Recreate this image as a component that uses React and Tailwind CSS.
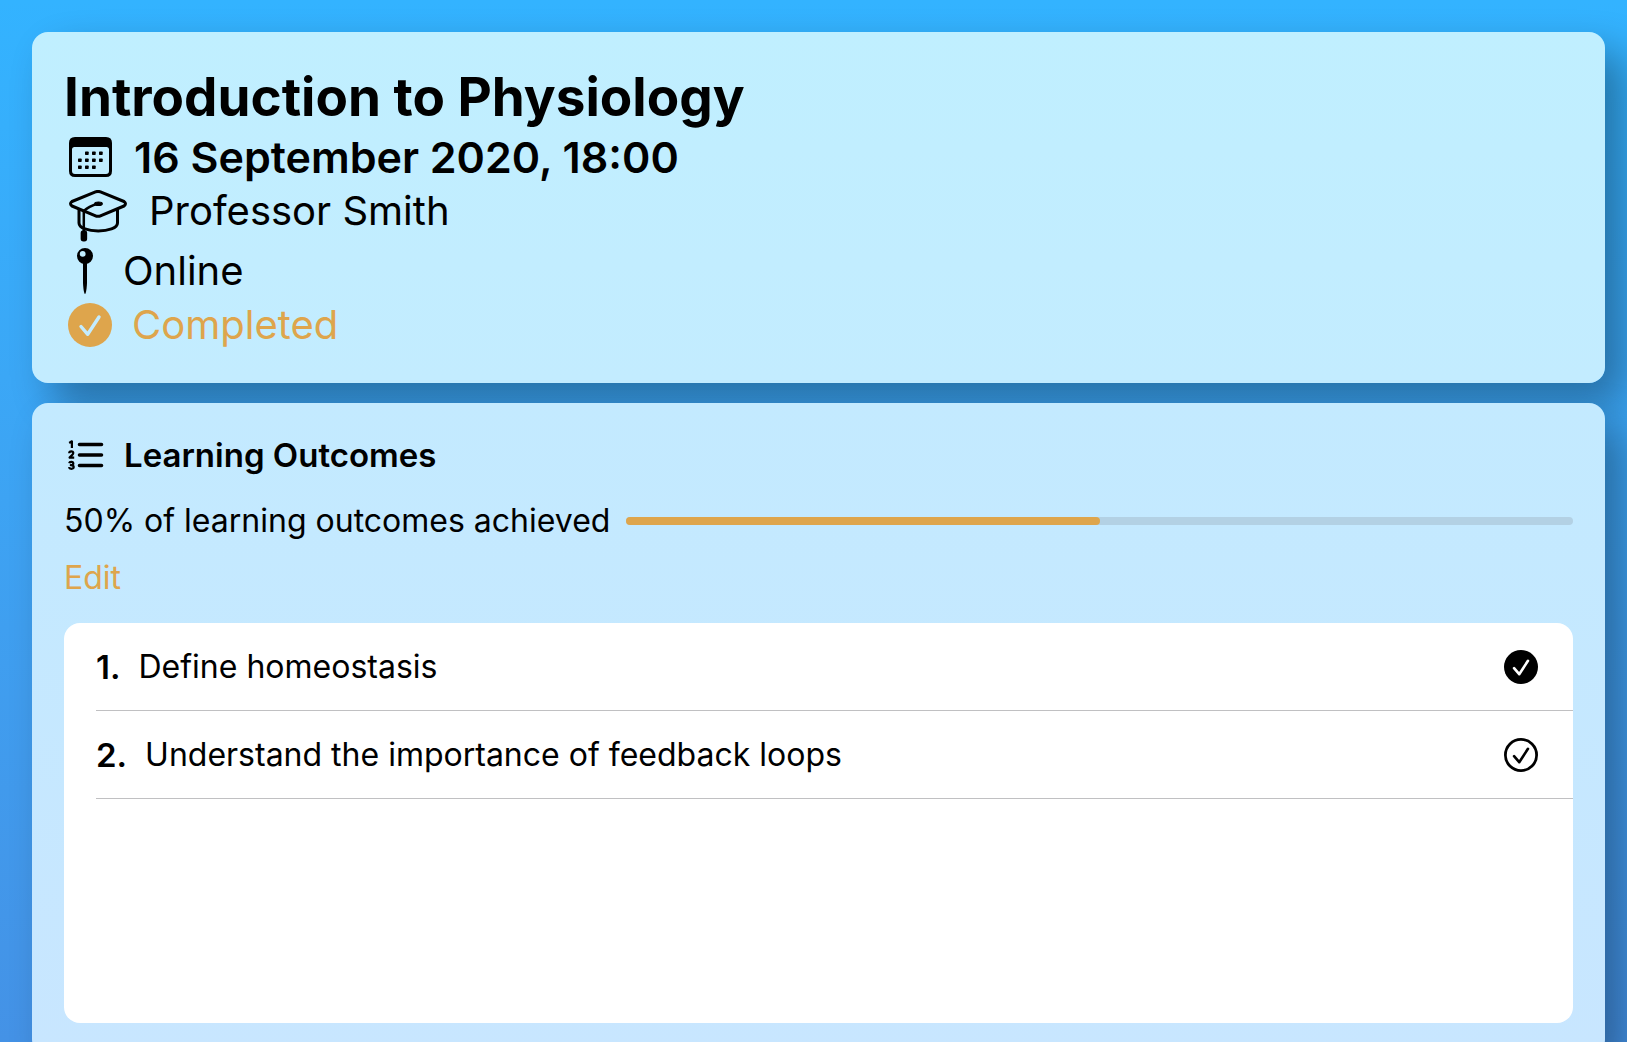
import React from "react";

function CalendarIcon() {
  return (
    <svg width="43" height="40" viewBox="0 0 43 40" aria-hidden="true">
      <path fillRule="evenodd" d="M6 0H37Q43 0 43 6V34Q43 40 37 40H6Q0 40 0 34V6Q0 0 6 0ZM5.500 10Q3 10 3 12.500V34Q3 37 6 37H37Q40 37 40 34V12.500Q40 10 37.500 10Z" />
      {[[16, 14.5], [23, 14.5], [30, 14.5], [9, 21.5], [16, 21.5], [23, 21.5], [30, 21.5], [9, 28.500], [16, 28.500], [23, 28.500]].map(([x, y]) => (
        <rect key={x + "-" + y} x={x} y={y} width="3.700" height="3.400" rx="0.7" />
      ))}
    </svg>
  );
}

function CapIcon() {
  return (
    <svg width="58" height="52" viewBox="0 0 58 52" fill="none" stroke="currentColor" strokeWidth="3" strokeLinejoin="round" strokeLinecap="round" aria-hidden="true">
      <path d="M26.500 1.900Q29 0.900 31.500 1.900L55 11.500Q58 13.700 55 16L32 25.600Q29 27 26 25.600L3 16Q0 13.700 3 11.500Z" />
      <path d="M10 19.500V33C10 43.500 48.500 43.500 48.500 33V20" />
      <path d="M29 13.500C23 15.500 18 18 14.800 21V41" strokeWidth="2.500" />
      <ellipse cx="29.500" cy="13.700" rx="3.800" ry="1.700" fill="currentColor" strokeWidth="1.200" />
      <rect x="12.400" y="41" width="5" height="9.800" rx="2" fill="currentColor" strokeWidth="1.500" />
    </svg>
  );
}

function PinIcon() {
  return (
    <svg width="16" height="46" viewBox="0 0 16 46" aria-hidden="true">
      <path fillRule="evenodd" d="M8 0A8 8 0 1 1 8 16A8 8 0 0 1 8 0ZM5.700 3A2.900 2.900 0 1 0 5.700 8.800A2.900 2.900 0 0 0 5.700 3Z" />
      <path d="M6 15H10V35Q9.700 42 8.600 45.400Q8 46.300 7.400 45.400Q6.300 42 6 35Z" />
    </svg>
  );
}

function CheckCircle({ size, filled, mark }) {
  return (
    <svg width={size} height={size} viewBox="0 0 44 44" fill="none" aria-hidden="true">
      {filled ? <circle cx="22" cy="22" r="22" fill="currentColor" /> : <circle cx="22" cy="22" r="20.200" stroke="currentColor" strokeWidth="3.600" />}
      <path d="M13 23.500L19.700 31.300L31 14" stroke={mark} strokeWidth="3.400" strokeLinecap="round" strokeLinejoin="round" />
    </svg>
  );
}

function NumberedListIcon() {
  return (
    <svg width="36" height="30" viewBox="0 0 36 30" aria-hidden="true">
      <g stroke="currentColor" strokeWidth="3.600" strokeLinecap="round">
        <path d="M11.500 4.500H33.500M11.500 15H33.500M11.500 25.500H33.500" />
      </g>
      <g fill="none" stroke="currentColor" strokeWidth="2.200" strokeLinejoin="round">
        <path d="M1.200 3L3.900 1.300V8" />
        <path d="M1.200 13.200C1.200 10.800 5.300 10.800 5.300 13C5.300 14.500 3.500 15.500 1.600 17.600H6.200" />
        <path d="M1.200 23.200C1.600 21.300 5.300 21.500 5.300 23.600C5.300 25 4 25.200 2.800 25.200C4.200 25.200 5.700 25.500 5.700 27.100C5.700 29.300 1.300 29.400 1 27.200" />
      </g>
    </svg>
  );
}

function Outcome({ number, children, done }) {
  return (
    <li className="ml-8 flex h-[88px] items-center border-b border-[#c0c0c2] pr-[35px]">
      <span className="text-[33px] font-semibold">{number}.</span>
      <span className="ml-[18px] flex-1">{children}</span>
      <button type="button" aria-label={"Toggle outcome " + number} aria-pressed={done}>
        <CheckCircle size={34} filled={done} mark={done ? "#ffffff" : "currentColor"} />
      </button>
    </li>
  );
}

export default function App() {
  return (
    <main className="flex h-screen flex-col gap-5 overflow-hidden bg-linear-to-b from-[#33b3ff] to-[#4492e6] py-8 pr-[22px] pl-8 font-['Inter',sans-serif] text-[32px] leading-10 text-black">
      <section className="shrink-0 rounded-2xl bg-linear-to-b from-[#c0efff] to-[#c3ecff] p-8 text-[40px] shadow-[20px_20px_40px_rgba(0,0,0,0.33)]">
        <h1 className="text-[53px] leading-[66px] font-bold">Introduction to Physiology</h1>
        <div className="flex h-[54px] items-center gap-[22px] pl-[5px] text-[43px] font-semibold">
          <CalendarIcon />
          <span>16 September 2020, 18:00</span>
        </div>
        <div className="flex h-[60px] items-start gap-[22px] pl-[5px]">
          <span className="pt-[6px]"><CapIcon /></span>
          <span className="leading-[54px]">Professor Smith</span>
        </div>
        <div className="flex h-[54px] items-center gap-[30px] pl-[13px]">
          <PinIcon />
          <span>Online</span>
        </div>
        <div className="flex h-[53px] items-center gap-5 pl-1 text-[#dea54c]">
          <CheckCircle size={44} filled mark="#c3ecff" />
          <span>Completed</span>
        </div>
      </section>

      <section className="shrink-0 rounded-2xl bg-linear-to-b from-[#c3eaff] to-[#c8e6ff] p-8 shadow-[20px_20px_40px_rgba(0,0,0,0.33)]">
        <h2 className="flex items-center gap-5 pl-1 text-[33px] leading-10 font-semibold">
          <NumberedListIcon />
          Learning Outcomes
        </h2>
        <div className="mt-[26px] flex items-center gap-4">
          <span id="progress-label">50% of learning outcomes achieved</span>
          <div role="progressbar" aria-labelledby="progress-label" aria-valuenow={50} aria-valuemin={0} aria-valuemax={100} className="h-2 flex-1 rounded-full bg-[#b3d1e4]">
            <div className="h-2 w-1/2 rounded-full bg-[#dea54c]" />
          </div>
        </div>
        <button type="button" className="mt-[17px] block text-[#dea54c]">Edit</button>
        <ol className="mt-[25px] h-[400px] rounded-2xl bg-white">
          <Outcome number={1} done>Define homeostasis</Outcome>
          <Outcome number={2} done={false}>Understand the importance of feedback loops</Outcome>
        </ol>
      </section>
    </main>
  );
}
